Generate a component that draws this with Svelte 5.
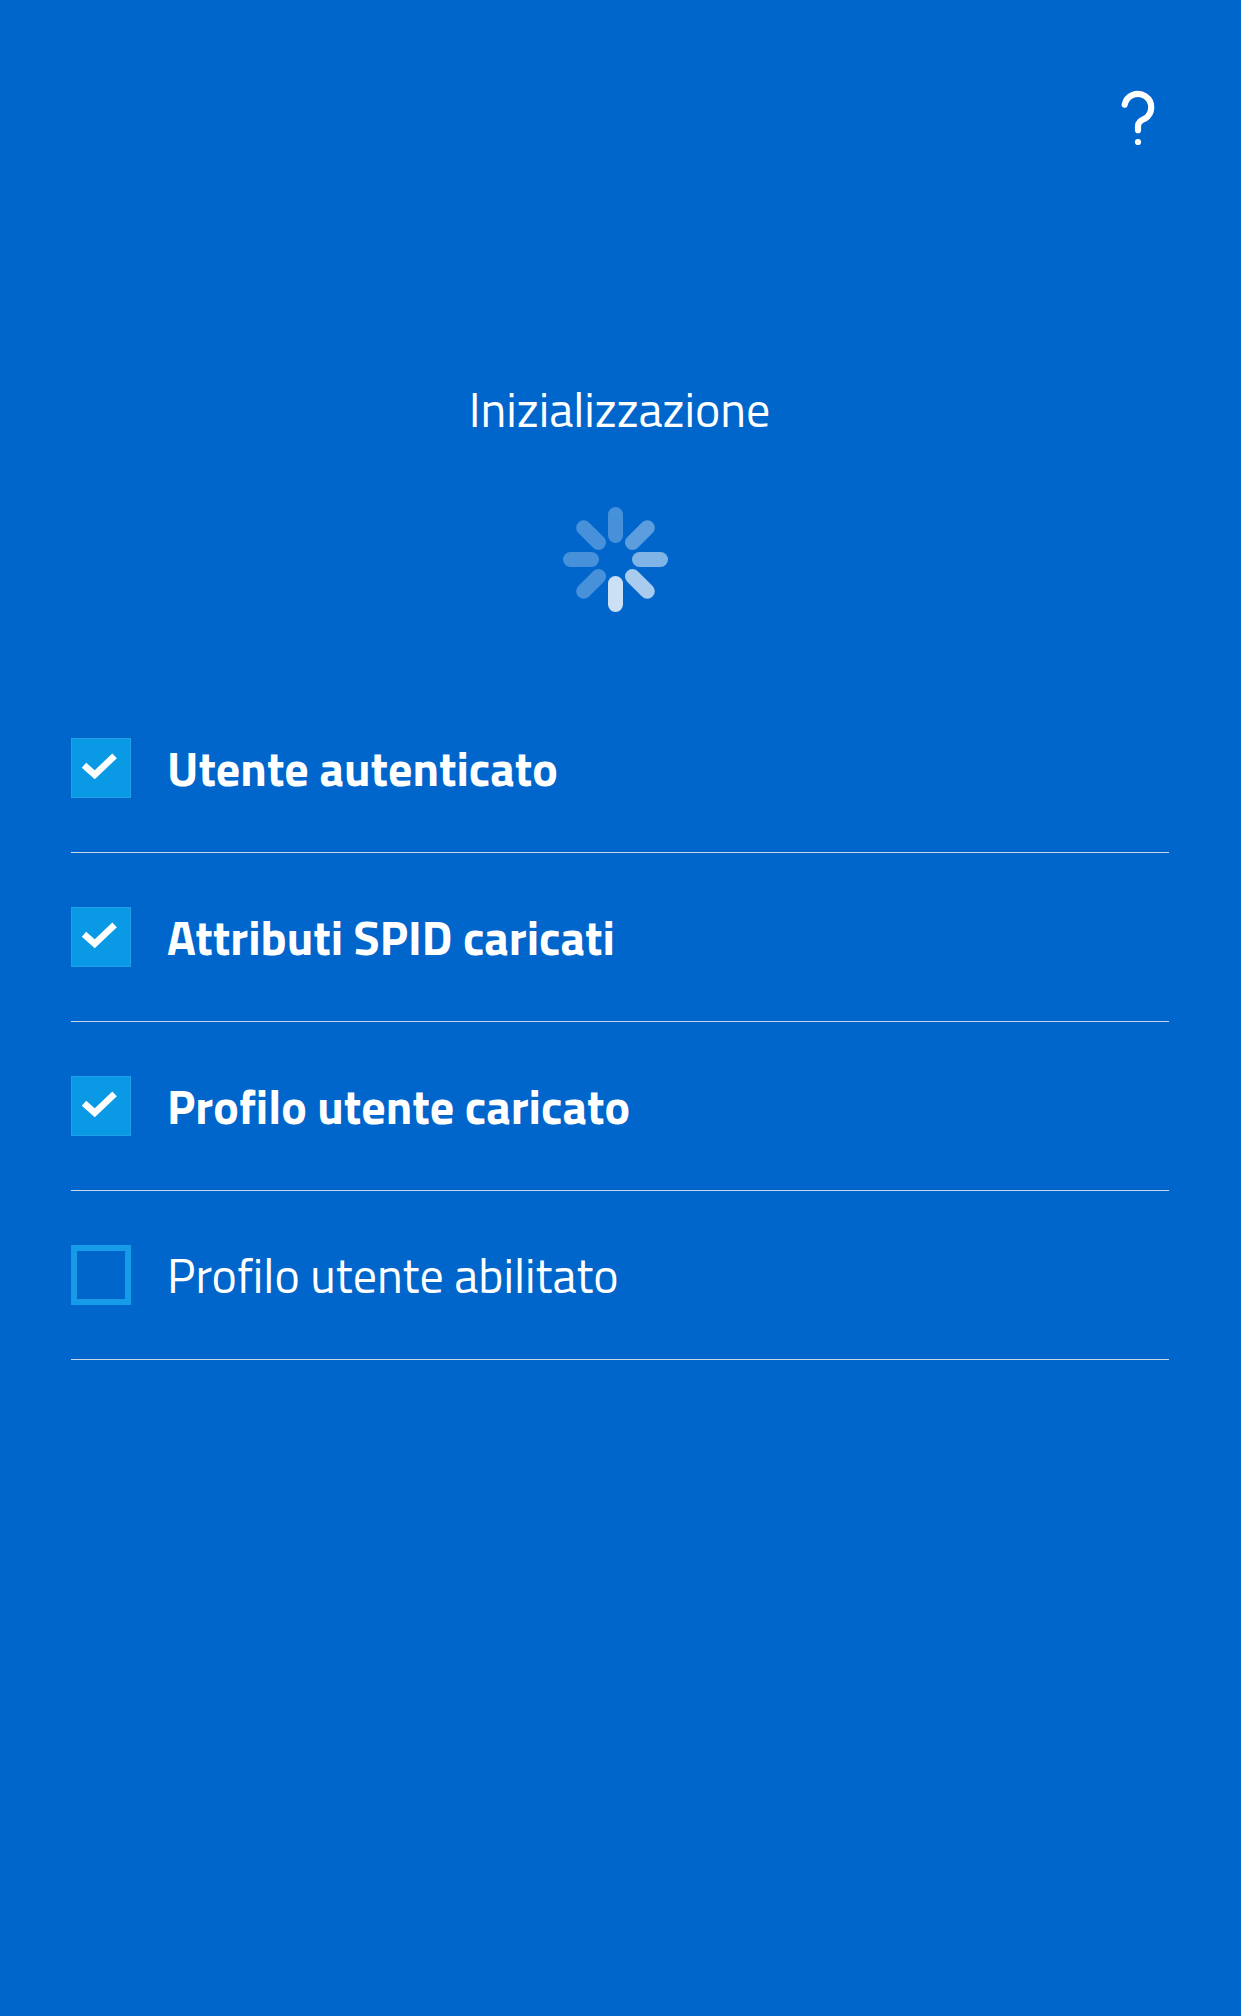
<script lang="ts">
    const steps = [
        { label: 'Utente autenticato', done: true },
        { label: 'Attributi SPID caricati', done: true },
        { label: 'Profilo utente caricato', done: true },
        { label: 'Profilo utente abilitato', done: false }
    ]
    // spinner bars, clockwise from the top
    const bars = [0.28, 0.36, 0.5, 0.66, 0.8, 0.28, 0.28, 0.28]
</script>

<main class="screen">
    <header>
        <button class="help" aria-label="Aiuto">
            <svg width="40" height="60" viewBox="0 0 40 60">
                <path d="M6.7 18.7A13.4 13.4 0 1 1 27 32.6C22.2 35 20 36.3 20 40.5V44.2" />
                <circle cx="20" cy="56" r="3.1" />
            </svg>
        </button>
    </header>

    <h1>Inizializzazione</h1>

    <svg class="spinner" width="107" height="107" viewBox="-53.5 -53.5 107 107">
        {#each bars as opacity, i}
            <rect x="-7.5" y="-52.5" width="15" height="36" rx="7.5" fill-opacity={opacity} transform="rotate({i * 45})" />
        {/each}
    </svg>

    <ul>
        {#each steps as step}
            <li class:done={step.done}>
                <span class="box">
                    {#if step.done}
                        <svg width="60" height="60" viewBox="0 0 60 60">
                            <path d="M13 27.3L23.7 36.8L43.6 17.8" />
                        </svg>
                    {/if}
                </span>
                <span class="label">{step.label}</span>
            </li>
        {/each}
    </ul>
</main>

<style>
    :global(body) {
        margin: 0;
        background: #0066cc;
    }

    .screen {
        display: flex;
        flex-direction: column;
        box-sizing: border-box;
        height: 2016px;
        padding: 86px 72px 0 71px;
        background: #0066cc;
        color: #fff;
        font-family: "Titillium Web", "Open Sans", sans-serif;
        overflow: hidden;
    }

    header {
        display: flex;
        justify-content: flex-end;
        padding-right: 11px;
    }

    .help {
        display: block;
        padding: 0;
        border: none;
        background: none;
        cursor: pointer;
    }

    .help svg {
        display: block;
    }

    .help path {
        fill: none;
        stroke: #fff;
        stroke-width: 6.2;
        stroke-linecap: round;
        stroke-linejoin: round;
    }

    .help circle {
        fill: #fff;
    }

    h1 {
        margin: 228px 0 0;
        padding-right: 1px;
        font-size: 48px;
        line-height: 72px;
        font-weight: 400;
        text-align: center;
    }

    .spinner {
        display: block;
        margin: 60px 0 0 491px;
        fill: #fff;
    }

    ul {
        margin: 71px 0 0;
        padding: 0;
        list-style: none;
    }

    li {
        display: flex;
        align-items: center;
        box-sizing: border-box;
        height: 169px;
        border-bottom: 1px solid #c8d6e8;
    }

    .box {
        box-sizing: border-box;
        width: 60px;
        height: 60px;
        margin-right: 36px;
        border: 6px solid #159be8;
    }

    .done .box {
        border: 1px solid #1e9fe8;
        background: #0a9ae5;
    }

    .box svg {
        display: block;
        margin: -1px;
    }

    .box path {
        fill: none;
        stroke: #fff;
        stroke-width: 6.6;
    }

    .label {
        padding-top: 2px;
        font-size: 48px;
        line-height: 72px;
        font-weight: 400;
        white-space: nowrap;
    }

    .done .label {
        font-weight: 700;
    }
</style>
